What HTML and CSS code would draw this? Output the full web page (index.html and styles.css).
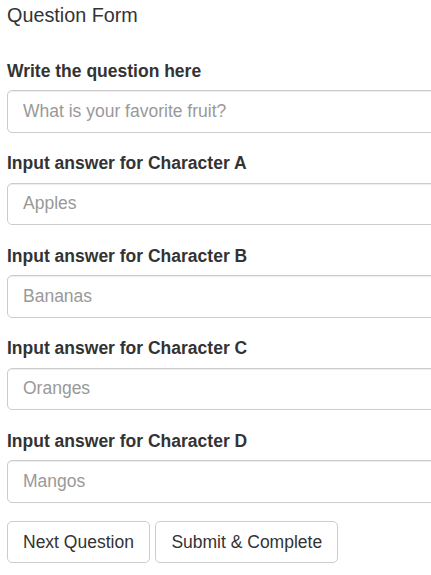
FILE: index.html
```html
<!DOCTYPE html>
<html>
<head>
<meta charset="utf-8">
<link rel="stylesheet" href="styles.css">
</head>
<body>
<div class="page">
  <div class="title">Question Form</div>
  <form class="form">
    <div class="group">
      <label class="label">Write the question here</label>
      <input class="control" type="text" placeholder="What is your favorite fruit?">
    </div>
    <div class="group">
      <label class="label">Input answer for Character A</label>
      <input class="control" type="text" placeholder="Apples">
    </div>
    <div class="group">
      <label class="label">Input answer for Character B</label>
      <input class="control" type="text" placeholder="Bananas">
    </div>
    <div class="group">
      <label class="label">Input answer for Character C</label>
      <input class="control" type="text" placeholder="Oranges">
    </div>
    <div class="group">
      <label class="label">Input answer for Character D</label>
      <input class="control" type="text" placeholder="Mangos">
    </div>
    <div class="actions">
      <button type="button" class="btn">Next Question</button>
      <button type="button" class="btn">Submit &amp; Complete</button>
    </div>
  </form>
</div>
</body>
</html>
```

FILE: styles.css
```css
html, body {
  margin: 0;
  padding: 0;
  overflow: hidden;
  background: #fff;
}
body {
  font-family: "Liberation Sans", Arial, Helvetica, sans-serif;
  font-size: 17.5px;
  line-height: 1.42857;
  color: #333;
}
.page {
  padding: 4px 0 0 7px;
  width: 460px;
}
.title {
  font-size: 19.8px;
  line-height: 22px;
  margin-bottom: 32.75px;
}
.form {
  display: flex;
  flex-direction: column;
}
.group {
  display: flex;
  flex-direction: column;
  margin-bottom: 18.75px;
}
.label {
  font-weight: bold;
  height: 25px;
  line-height: 25px;
  margin-bottom: 6.25px;
}
.control {
  box-sizing: border-box;
  height: 42.5px;
  width: 100%;
  padding: 7.5px 15px;
  font-family: inherit;
  font-size: 17.5px;
  color: #555;
  border: 1px solid #ccc;
  border-radius: 5px;
  box-shadow: inset 0 1px 1px rgba(0,0,0,.075);
  outline: none;
  background: #fff;
}
.control::placeholder {
  color: #999;
}
.actions {
  display: flex;
  gap: 5.5px;
}
.btn {
  box-sizing: border-box;
  height: 42px;
  padding: 7.5px 15px;
  font-family: inherit;
  font-size: 17.5px;
  color: #333;
  background: #fff;
  border: 1px solid #ccc;
  border-radius: 5px;
  cursor: pointer;
}
```
